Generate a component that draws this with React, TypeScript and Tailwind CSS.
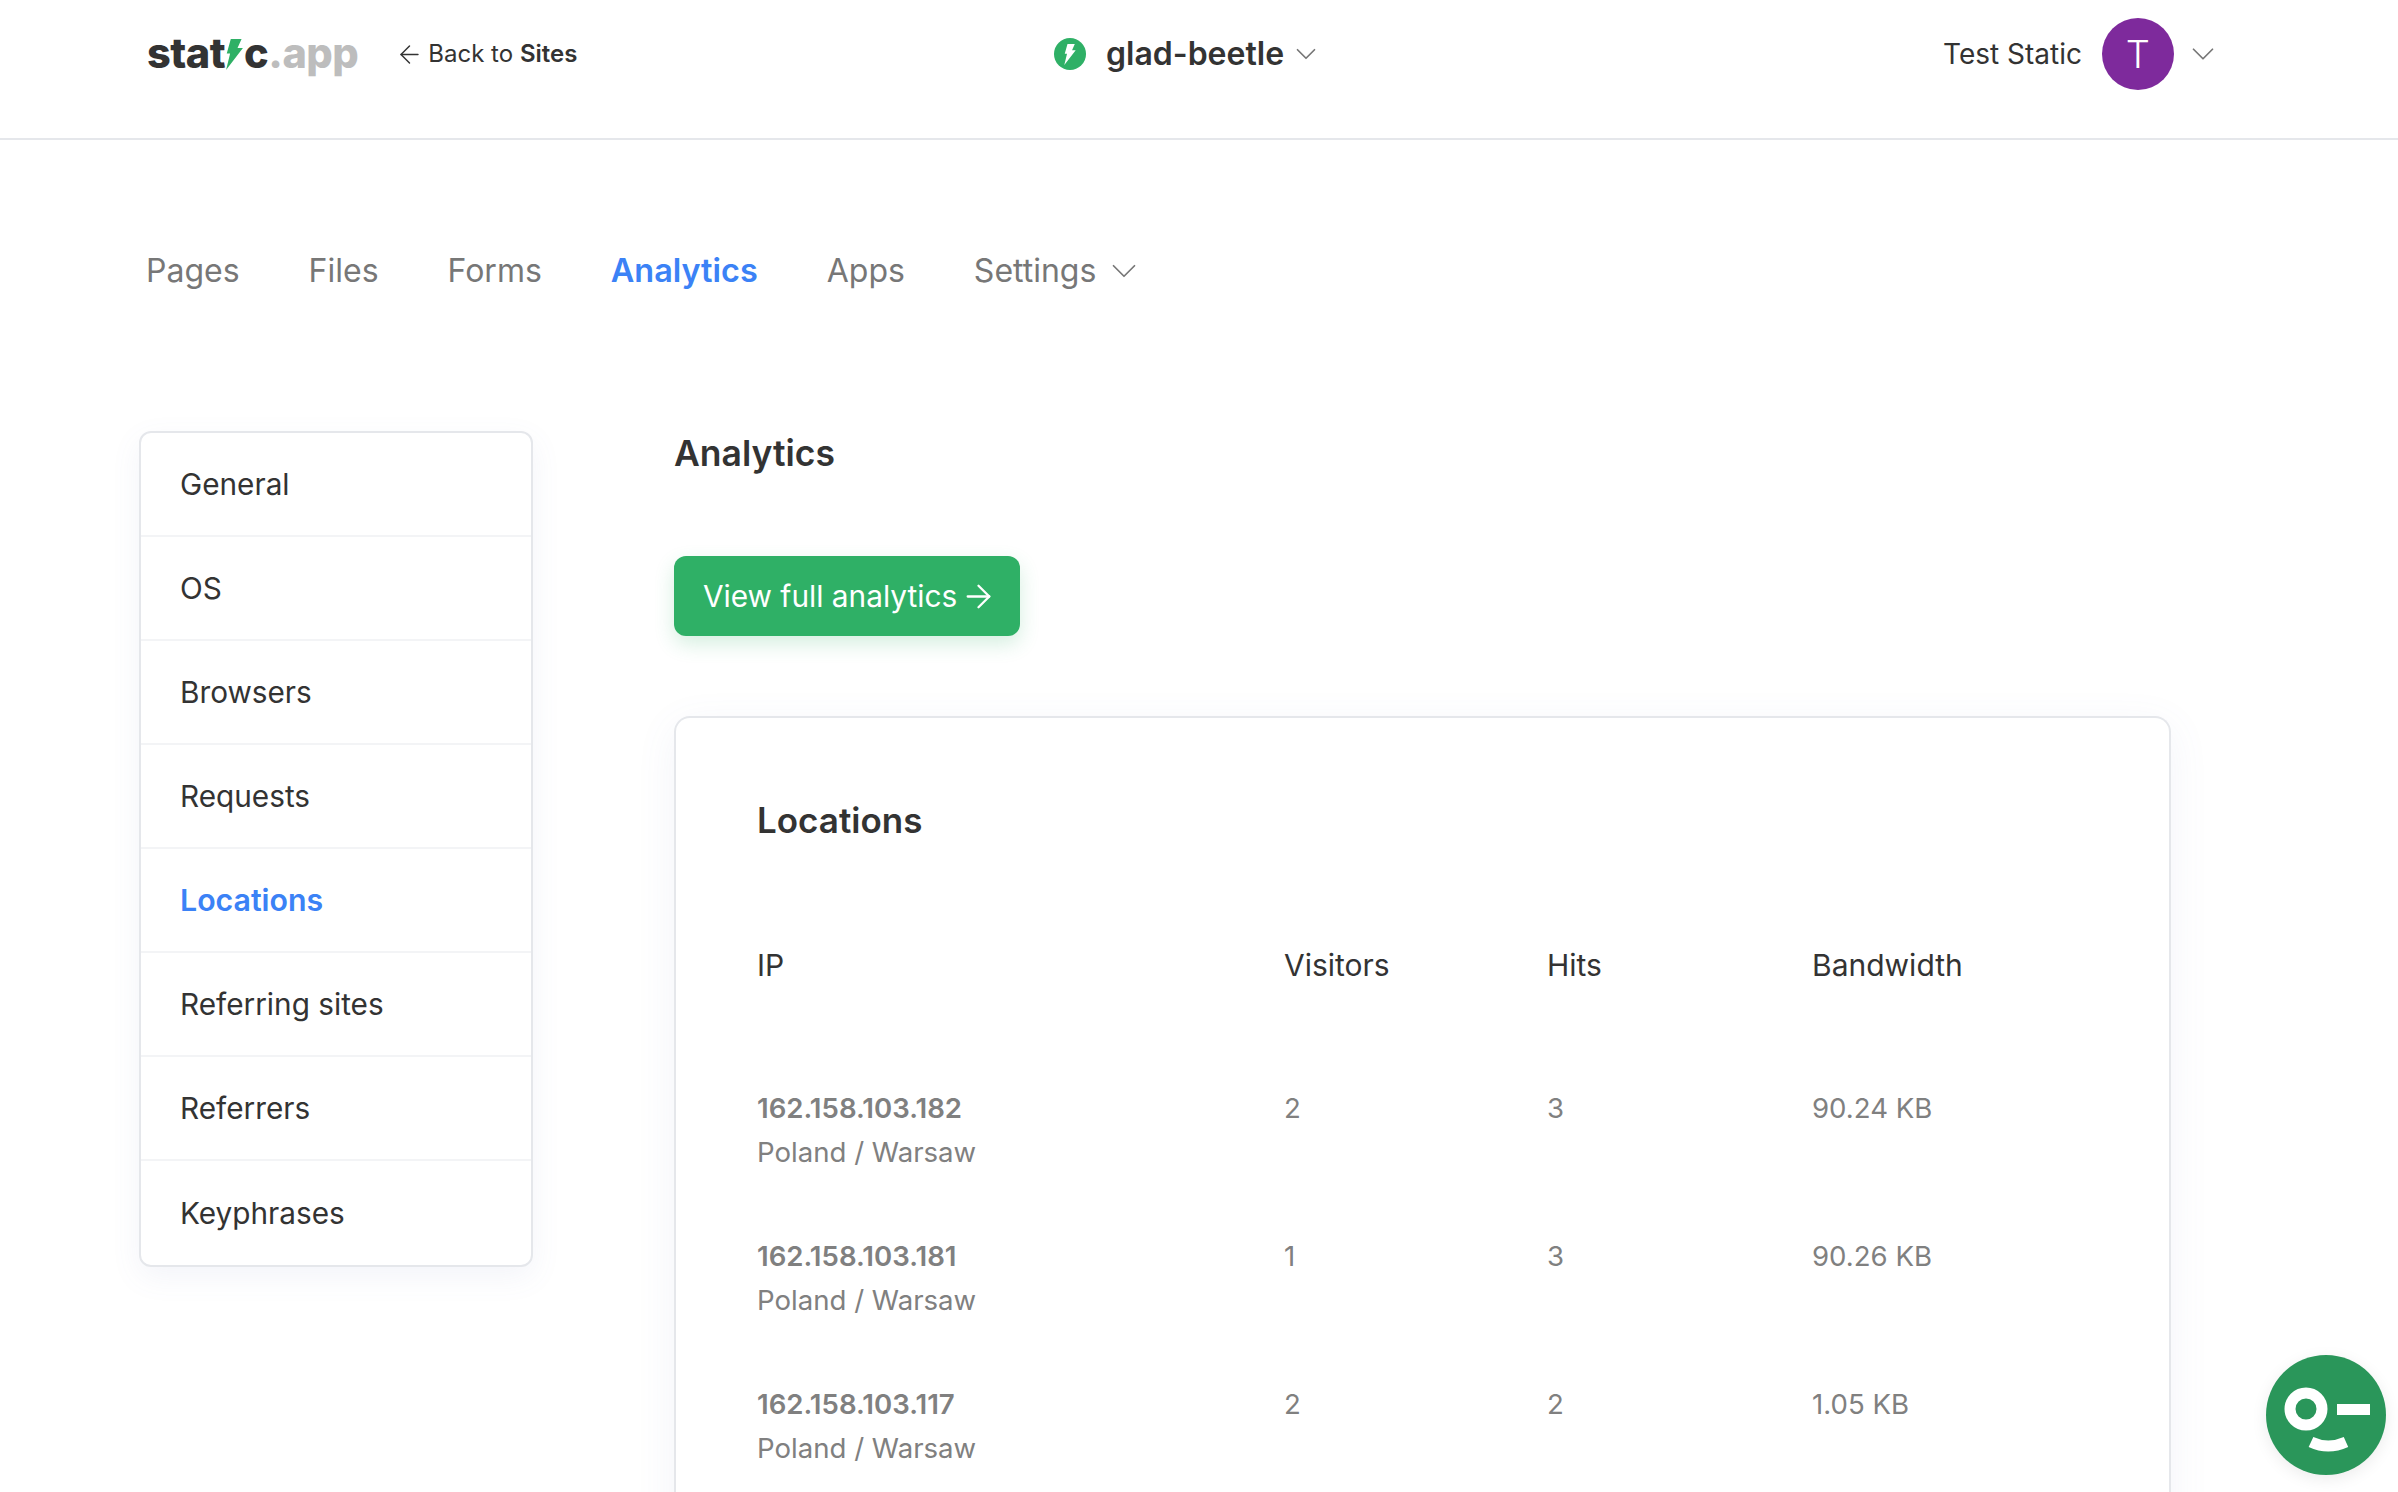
import React from 'react';
import { ArrowLeft, ArrowRight, ChevronDown } from 'lucide-react';

const sideItems = ['General', 'OS', 'Browsers', 'Requests', 'Locations', 'Referring sites', 'Referrers', 'Keyphrases'];
const tabs = ['Pages', 'Files', 'Forms', 'Analytics', 'Apps'];
const rows = [
  { ip: '162.158.103.182', visitors: '2', hits: '3', bandwidth: '90.24 KB' },
  { ip: '162.158.103.181', visitors: '1', hits: '3', bandwidth: '90.26 KB' },
  { ip: '162.158.103.117', visitors: '2', hits: '2', bandwidth: '1.05 KB' },
];

const boltPoints = '14,0 46,0 34,27 50,27 0,92 12,43 2,43';

function Logo() {
  return (
    <div className="flex items-baseline text-[41.5px] leading-none font-extrabold tracking-[-0.5px] text-[#333333]">
      <span>stat</span>
      <svg viewBox="0 0 50 92" className="w-[17px] h-[31px] mx-[1px] self-center mt-[1px]">
        <polygon points={boltPoints} fill="#2fb066" />
      </svg>
      <span>c</span>
      <span className="text-[#bdbdbd]">.app</span>
    </div>
  );
}

function Header() {
  return (
    <header className="h-[140px] border-b-2 border-[#e5e7eb] pl-[147px] pb-[30px] grid grid-cols-[907px_889px_auto] items-center">
      <div className="flex items-center">
        <Logo />
        <div className="flex items-center ml-[37px] text-[24px] text-[#333333]">
          <ArrowLeft className="w-[29px] h-[29px] mr-[4px]" strokeWidth={1.2} />
          <span>Back to <span className="font-semibold">Sites</span></span>
        </div>
      </div>
      <div className="flex items-center">
        <div className="w-[32px] h-[32px] rounded-full bg-[#2fb066] flex items-center justify-center">
          <svg viewBox="0 0 50 92" className="w-[12px] h-[21px]">
            <polygon points={boltPoints} fill="#ffffff" />
          </svg>
        </div>
        <span className="ml-[20px] text-[32px] font-semibold text-[#333333]">glad-beetle</span>
        <ChevronDown className="ml-[5px] w-[34px] h-[34px] text-[#777777]" strokeWidth={1.2} />
      </div>
      <div className="flex items-center">
        <span className="text-[28px] text-[#333333]">Test Static</span>
        <div className="ml-[20px] w-[72px] h-[72px] rounded-full bg-[#7e2a9c] flex items-center justify-center text-white text-[38px] font-light">T</div>
        <ChevronDown className="ml-[10px] w-[38px] h-[38px] text-[#777777]" strokeWidth={1.1} />
      </div>
    </header>
  );
}

function Tabs() {
  return (
    <nav className="flex items-center gap-[69px] pl-[146px] pt-[107px] text-[32px] text-[#777777]">
      {tabs.map((t) => (
        <span key={t} className={t === 'Analytics' ? 'font-semibold text-[32.4px] text-[#3b82f6]' : ''}>{t}</span>
      ))}
      <span className="flex items-center">
        Settings
        <ChevronDown className="ml-[7px] w-[42px] h-[42px]" strokeWidth={1} />
      </span>
    </nav>
  );
}

function Sidebar() {
  return (
    <aside className="w-[394px] shrink-0 self-start rounded-[12px] border-2 border-[#e5e7eb] bg-white shadow-[0_10px_30px_rgba(100,120,180,0.08)] divide-y-2 divide-[#f3f4f6]">
      {sideItems.map((item) => (
        <div
          key={item}
          className={`h-[104px] flex items-center pl-[39px] pt-[2px] ${item === 'Locations' ? 'font-semibold text-[30.3px] text-[#3b82f6]' : 'text-[29.75px] text-[#333333]'}`}
        >
          {item}
        </div>
      ))}
    </aside>
  );
}

function Main() {
  return (
    <main className="ml-[141px] w-[1497px]">
      <h1 className="mt-[1px] text-[35.5px] leading-[44px] font-semibold text-[#333333]">Analytics</h1>
      <button className="mt-[80px] w-[346px] h-[80px] rounded-[12px] bg-[#2fb066] text-white text-[29.8px] flex items-center pl-[29px] pt-[1px] shadow-[0_8px_20px_rgba(47,176,102,0.2)]">
        View full analytics
        <ArrowRight className="ml-[3px] w-[37px] h-[37px]" strokeWidth={1.5} />
      </button>
      <section className="mt-[80px] rounded-t-[16px] border-2 border-b-0 border-[#e5e7eb] bg-white pl-[81px] pt-[80px] h-[900px] shadow-[0_10px_40px_rgba(100,120,180,0.08)]">
        <h2 className="text-[35px] leading-[44px] font-semibold text-[#333333]">Locations</h2>
        <div className="mt-[101px] grid grid-cols-[527px_263px_265px_1fr] text-[30px] leading-[44px] text-[#333333]">
          <span>IP</span>
          <span>Visitors</span>
          <span>Hits</span>
          <span>Bandwidth</span>
        </div>
        <div className="mt-[99px] flex flex-col gap-[60px]">
          {rows.map((r) => (
            <div key={r.ip} className="grid grid-cols-[527px_263px_265px_1fr] text-[27.6px] leading-[44px] text-[#808080]">
              <div>
                <div className="font-semibold">{r.ip}</div>
                <div>Poland / Warsaw</div>
              </div>
              <span>{r.visitors}</span>
              <span>{r.hits}</span>
              <span>{r.bandwidth}</span>
            </div>
          ))}
        </div>
      </section>
    </main>
  );
}

function ChatWidget() {
  return (
    <div className="absolute left-[2266px] top-[1355px] w-[120px] h-[120px] rounded-full bg-[#2a965a] shadow-[0_4px_16px_rgba(0,0,0,0.08)]">
      <svg viewBox="0 0 120 120" className="w-full h-full">
        <circle cx="40" cy="54" r="16" fill="none" stroke="#ffffff" strokeWidth="11" />
        <rect x="71" y="49" width="33" height="11" fill="#ffffff" />
        <path d="M45 87 Q62 95 80 87" fill="none" stroke="#ffffff" strokeWidth="11" />
      </svg>
    </div>
  );
}

export default function App() {
  return (
    <div className="relative h-[1492px] overflow-hidden bg-white font-[Inter,sans-serif]">
      <Header />
      <Tabs />
      <div className="flex pl-[139px] pt-[135px]">
        <Sidebar />
        <Main />
      </div>
      <ChatWidget />
    </div>
  );
}
